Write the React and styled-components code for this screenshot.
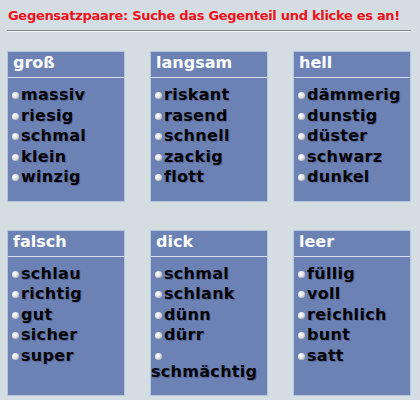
import styled, { createGlobalStyle } from "styled-components";

const pairs = [
    { word: "groß", options: ["massiv", "riesig", "schmal", "klein", "winzig"] },
    { word: "langsam", options: ["riskant", "rasend", "schnell", "zackig", "flott"] },
    { word: "hell", options: ["dämmerig", "dunstig", "düster", "schwarz", "dunkel"] },
    { word: "falsch", options: ["schlau", "richtig", "gut", "sicher", "super"] },
    { word: "dick", options: ["schmal", "schlank", "dünn", "dürr", "schmächtig"] },
    { word: "leer", options: ["füllig", "voll", "reichlich", "bunt", "satt"] },
];

const GlobalStyle = createGlobalStyle`
    html, body {
        margin: 0;
        padding: 0;
        background: #d4dee2;
    }
    body {
        font-family: "DejaVu Sans", Verdana, sans-serif;
    }
`;

const App = () => {
    return (
        <>
            <GlobalStyle />
            <Page>
                <Title>Gegensatzpaare: Suche das Gegenteil und klicke es an!</Title>
                <Rule />
                <Grid>
                    {pairs.map((pair) => (
                        <Card key={pair.word}>
                            <CardHeader>{pair.word}</CardHeader>
                            <List>
                                {pair.options.map((option) => (
                                    <Option key={option}>
                                        <Bullet />
                                        <wbr />
                                        {option}
                                    </Option>
                                ))}
                            </List>
                        </Card>
                    ))}
                </Grid>
            </Page>
        </>
    );
};

const Page = styled.div`
    width: 404px;
    padding: 8px 0 0 7px;
`;

const Title = styled.div`
    color: #f0101a;
    font-size: 13px;
    font-weight: bold;
    letter-spacing: -0.3px;
    line-height: 16px;
    padding-left: 1px;
    white-space: nowrap;
`;

const Rule = styled.div`
    margin-top: 6px;
    height: 1px;
    background: #7d878b;
    border-bottom: 1px solid #f4f7f8;
`;

const Grid = styled.div`
    display: grid;
    grid-template-columns: repeat(3, 118px);
    column-gap: 25px;
    row-gap: 28px;
    margin-top: 19px;
`;

const Card = styled.div`
    background: #6d82b4;
    border: 1px solid #b9c6df;
    display: flex;
    flex-direction: column;
`;

const CardHeader = styled.div`
    color: #fff;
    font-size: 16px;
    font-weight: bold;
    line-height: 19px;
    padding: 1px 6px 5px 5px;
    border-bottom: 1px solid #d6deec;
`;

const List = styled.div`
    padding: 9px 0 11px;
`;

const Option = styled.div`
    color: #000;
    font-size: 16px;
    font-weight: bold;
    letter-spacing: 0.3px;
    line-height: 16px;
    margin-bottom: 4.5px;
    text-shadow: 1px 1px 0 rgba(30, 40, 90, 0.3);
    cursor: pointer;
`;

const Bullet = styled.span`
    display: inline-block;
    vertical-align: middle;
    width: 7px;
    height: 7px;
    margin: 0 2px 0 4px;
    border-radius: 50%;
    background: radial-gradient(circle at 35% 35%, #ffffff 0%, #e4e4e4 45%, #9a9a9a 100%);
`;

export default App;
